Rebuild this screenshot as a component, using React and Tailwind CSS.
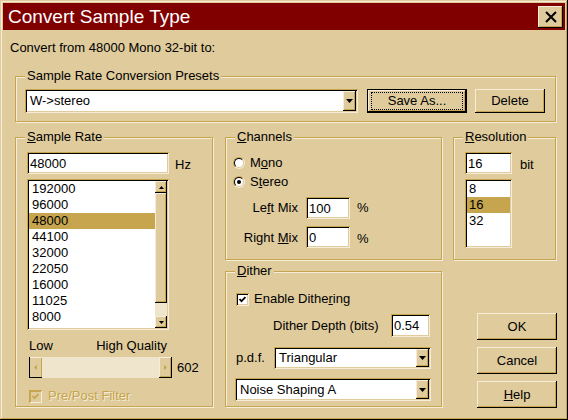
import React from "react";

const RAISED =
  "bg-[#dfcb9c] shadow-[inset_-1px_-1px_0_#000,inset_1px_1px_0_#f5edda,inset_-2px_-2px_0_#c6a54e,inset_2px_2px_0_#dfcb9c]";
const SUNKEN =
  "bg-white shadow-[inset_1px_1px_0_#c6a54e,inset_-1px_-1px_0_#f5edda,inset_2px_2px_0_#000,inset_-2px_-2px_0_#dfcb9c]";
const ETCH =
  "border border-[#c6a54e] shadow-[inset_1px_1px_0_#f5edda,1px_1px_0_#f5edda]";

function Group({ label, className, children }) {
  return (
    <div className={`relative ${ETCH} ${className}`}>
      <div className="absolute left-[9px] -top-[9px] px-[2px] bg-[#dfcb9c] leading-[16px] whitespace-nowrap">
        {label}
      </div>
      {children}
    </div>
  );
}

function DownArrow({ color = "#000" }) {
  return (
    <svg width="7" height="4" viewBox="0 0 7 4">
      <path d="M0 0H7L3.5 4Z" fill={color} />
    </svg>
  );
}

function Combo({ value, className }) {
  return (
    <div className={`flex p-[2px] ${SUNKEN} ${className}`}>
      <div className="flex-1 flex items-center pl-[3px] whitespace-nowrap overflow-hidden">
        {value}
      </div>
      <div className={`w-[13px] h-full flex items-center justify-center ${RAISED}`}>
        <DownArrow />
      </div>
    </div>
  );
}

function Edit({ value, className }) {
  return (
    <div className={`flex items-center pl-[3px] pt-[1px] ${SUNKEN} ${className}`}>
      {value}
    </div>
  );
}

function Button({ children, className, isDefault }) {
  if (isDefault) {
    return (
      <div className={`border border-black ${className}`}>
        <div className={`relative w-full h-full flex items-center justify-center ${RAISED}`}>
          <div className="absolute left-[3px] right-[3px] top-[2px] bottom-[2px] border border-dotted border-black" />
          <span>{children}</span>
        </div>
      </div>
    );
  }
  return (
    <div className={`flex items-center justify-center ${RAISED} ${className}`}>
      {children}
    </div>
  );
}

function Radio({ checked }) {
  return (
    <div className="w-[12px] h-[12px] rounded-full border border-t-[#c6a54e] border-l-[#c6a54e] border-r-[#f5edda] border-b-[#f5edda]">
      <div className="w-full h-full rounded-full border border-t-black border-l-black border-r-[#dfcb9c] border-b-[#dfcb9c] bg-white flex items-center justify-center">
        {checked && <div className="w-[4px] h-[4px] rounded-full bg-black" />}
      </div>
    </div>
  );
}

function Check({ disabled }) {
  return (
    <div
      className={`w-[13px] h-[13px] flex items-center justify-center ${
        disabled
          ? "bg-[#dfcb9c] shadow-[inset_1px_1px_0_#c6a54e,inset_-1px_-1px_0_#f5edda,inset_2px_2px_0_#c6a54e,inset_-2px_-2px_0_#dfcb9c]"
          : SUNKEN
      }`}
    >
      <svg width="7" height="7" viewBox="0 0 7 7">
        <path
          d="M0.5 3 L2.5 5.2 L6.5 1"
          fill="none"
          stroke={disabled ? "#c6a54e" : "#000"}
          strokeWidth="1.8"
        />
      </svg>
    </div>
  );
}

const RATES = ["192000", "96000", "48000", "44100", "32000", "22050", "16000", "11025", "8000", "6000"];

export default function App() {
  return (
    <div className="w-[568px] h-[420px] bg-[#dfcb9c] p-[3px] text-[13px] text-black font-['Liberation_Sans',Arial,sans-serif] shadow-[inset_-1px_-1px_0_#000,inset_1px_1px_0_#dfcb9c,inset_-2px_-2px_0_#c6a54e,inset_2px_2px_0_#f5edda] overflow-hidden">
      {/* Title bar */}
      <div className="h-[27px] bg-[#800000] flex items-center justify-between pl-[5px] pr-[2px]">
        <span className="text-white text-[19px] leading-[22px] whitespace-nowrap">Convert Sample Type</span>
        <div className={`w-[25px] h-[22px] flex items-center justify-center ${RAISED}`}>
          <svg width="12" height="12" viewBox="0 0 12 12">
            <path d="M1 1L11 11M11 1L1 11" stroke="#000" strokeWidth="2" fill="none" />
          </svg>
        </div>
      </div>

      {/* Body */}
      <div className="pl-[12px]">
        <div className="mt-[10px] h-[16px] leading-[16px] -ml-[5px] whitespace-nowrap">
          Convert from 48000 Mono 32-bit to:
        </div>

        {/* Presets */}
        <Group
          label="Sample Rate Conversion Presets"
          className="mt-[20px] w-[541px] h-[46px] flex items-start pl-[9px] pt-[12px]"
        >
          <Combo value="W->stereo" className="w-[333px] h-[24px]" />
          <Button isDefault className="ml-[9px] w-[100px] h-[24px]">Save As...</Button>
          <Button className="ml-[8px] w-[70px] h-[24px]">Delete</Button>
        </Group>

        <div className="mt-[15px] flex items-start">
          {/* Sample Rate */}
          <Group
            label={<><span className="underline">S</span>ample Rate</>}
            className="w-[198px] h-[270px] pl-[11px] pt-[14px] flex flex-col"
          >
            <div className="flex items-start">
              <Edit value="48000" className="w-[142px] h-[22px]" />
              <span className="ml-[6px] mt-[5px] leading-[16px]">Hz</span>
            </div>
            <div className={`mt-[5px] w-[142px] h-[151px] p-[2px] flex ${SUNKEN}`}>
              <div className="flex-1 overflow-hidden">
                {RATES.map((r) => (
                  <div
                    key={r}
                    className={`h-[16px] leading-[16px] pl-[3px] ${r === "48000" ? "bg-[#c6a54e]" : ""}`}
                  >
                    {r}
                  </div>
                ))}
              </div>
              <div className="w-[12px] flex flex-col bg-[#efe5cc]">
                <div className={`h-[12px] flex items-center justify-center ${RAISED}`}>
                  <svg width="5" height="3" viewBox="0 0 5 3">
                    <path d="M0 3H5L2.5 0Z" fill="#000" />
                  </svg>
                </div>
                <div className={`h-[110px] ${RAISED}`} />
                <div className="flex-1" />
                <div className={`h-[12px] flex items-center justify-center ${RAISED}`}>
                  <svg width="5" height="3" viewBox="0 0 5 3">
                    <path d="M0 0H5L2.5 3Z" fill="#000" />
                  </svg>
                </div>
              </div>
            </div>
            <div className="mt-[8px] w-[142px] flex justify-between px-[2px] leading-[16px]">
              <span>Low</span>
              <span>High Quality</span>
            </div>
            <div className="mt-[3px] flex items-center">
              <div className="ml-[2px] w-[143px] h-[21px] flex bg-[#efe5cc]">
                <div className="w-[13px] h-full flex items-center justify-center bg-[#dfcb9c] shadow-[inset_1px_0_0_#000,inset_0_-1px_0_#000,inset_0_1px_0_#f5edda,inset_-1px_0_0_#c6a54e]">
                  <svg width="3" height="5" viewBox="0 0 3 5">
                    <path d="M3 0V5L0 2.5Z" fill="#c6a54e" />
                  </svg>
                </div>
                <div className="flex-1" />
                <div className={`w-[13px] h-full flex items-center justify-center ${RAISED}`}>
                  <svg width="3" height="5" viewBox="0 0 3 5">
                    <path d="M0 0V5L3 2.5Z" fill="#c6a54e" />
                  </svg>
                </div>
              </div>
              <span className="ml-[5px] leading-[16px]">602</span>
            </div>
            <div className="mt-[10px] ml-[2px] flex items-center">
              <Check disabled />
              <span className="ml-[6px] leading-[16px] text-[#c6a54e] [text-shadow:1px_1px_0_#f5edda]">
                Pre/Post Filter
              </span>
            </div>
          </Group>

          <div className="ml-[12px] flex flex-col">
            <div className="flex items-start">
              {/* Channels */}
              <Group
                label={<><span className="underline">C</span>hannels</>}
                className="w-[217px] h-[123px] pl-[7px] pt-[17px] flex flex-col"
              >
                <div className="flex items-center h-[16px]">
                  <Radio />
                  <span className="ml-[5px]">M<span className="underline">o</span>no</span>
                </div>
                <div className="mt-[3px] flex items-center h-[16px]">
                  <Radio checked />
                  <span className="ml-[5px]">S<span className="underline">t</span>ereo</span>
                </div>
                <div className="mt-[7px] flex items-center">
                  <span className="w-[65px] text-right">Le<span className="underline">f</span>t Mix</span>
                  <Edit value="100" className="ml-[8px] w-[44px] h-[22px]" />
                  <span className="ml-[7px]">%</span>
                </div>
                <div className="mt-[7px] flex items-center">
                  <span className="w-[65px] text-right">Right <span className="underline">M</span>ix</span>
                  <Edit value="0" className="ml-[8px] w-[44px] h-[22px]" />
                  <span className="ml-[7px] mt-[3px]">%</span>
                </div>
              </Group>

              {/* Resolution */}
              <Group
                label={<><span className="underline">R</span>esolution</>}
                className="ml-[11px] w-[103px] h-[123px] pl-[11px] pt-[14px] flex flex-col"
              >
                <div className="flex items-start">
                  <Edit value="16" className="w-[47px] h-[22px]" />
                  <span className="ml-[8px] mt-[5px] leading-[16px]">bit</span>
                </div>
                <div className={`mt-[5px] w-[47px] h-[69px] p-[2px] ${SUNKEN}`}>
                  {["8", "16", "32"].map((r) => (
                    <div
                      key={r}
                      className={`h-[16px] leading-[16px] pl-[2px] ${r === "16" ? "bg-[#c6a54e]" : ""}`}
                    >
                      {r}
                    </div>
                  ))}
                </div>
              </Group>
            </div>

            <div className="mt-[11px] flex items-start">
              {/* Dither */}
              <Group
                label={<><span className="underline">D</span>ither</>}
                className="w-[217px] h-[136px] pl-[10px] pr-[10px] pt-[19px] flex flex-col"
              >
                <div className="flex items-center">
                  <Check />
                  <span className="ml-[5px] leading-[16px]">
                    Enable Dithe<span className="underline">r</span>ing
                  </span>
                </div>
                <div className="mt-[7px] flex items-center">
                  <span className="ml-[37px] whitespace-nowrap">Dither Depth (bits)</span>
                  <Edit value="0.54" className="ml-auto mr-[1px] w-[39px] h-[23px]" />
                </div>
                <div className="mt-[10px] flex items-center">
                  <span>p.d.f.</span>
                  <Combo value="Triangular" className="ml-auto w-[157px] h-[22px]" />
                </div>
                <Combo value="Noise Shaping A" className="mt-[9px] -ml-[1px] w-[196px] h-[23px]" />
              </Group>

              {/* Buttons */}
              <div className="ml-[35px] pt-[42px] flex flex-col gap-[7px]">
                <Button className="w-[80px] h-[27px]">OK</Button>
                <Button className="w-[80px] h-[27px]">Cancel</Button>
                <Button className="w-[80px] h-[27px]">
                  <span><span className="underline">H</span>elp</span>
                </Button>
              </div>
            </div>
          </div>
        </div>
      </div>
    </div>
  );
}
